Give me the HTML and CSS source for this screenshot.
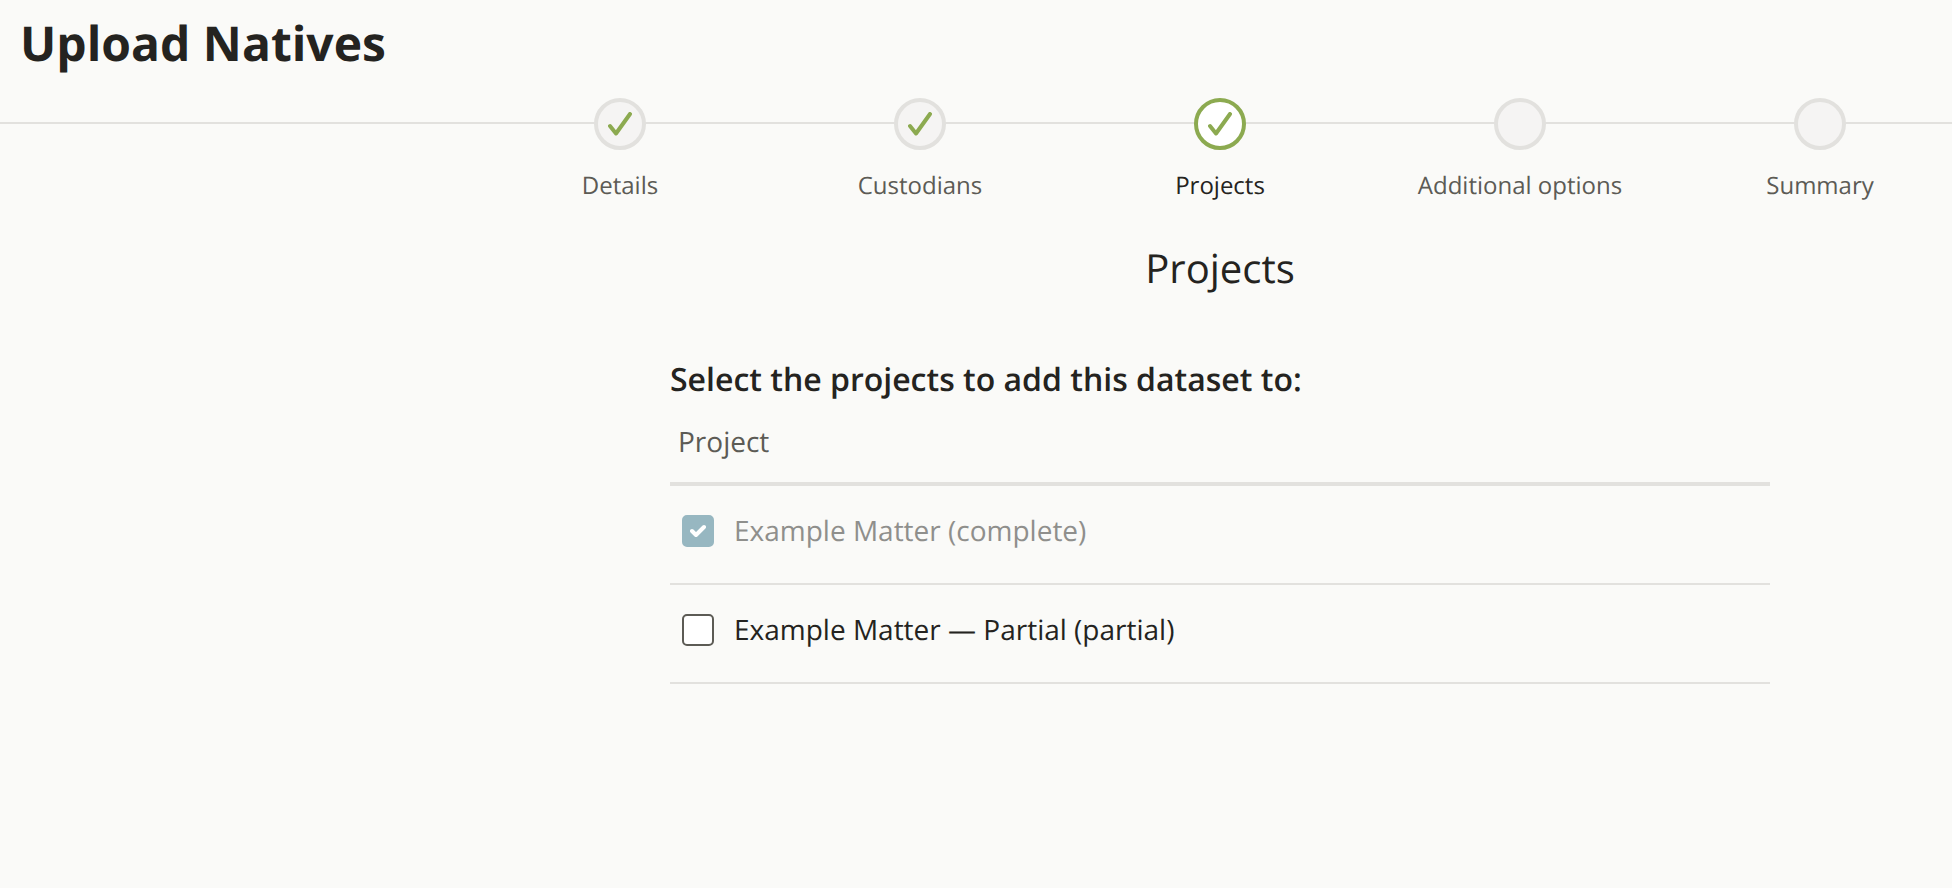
FILE: index.html
```html
<!DOCTYPE html>
<html lang="en">
<head>
  <meta charset="utf-8">
  <meta name="viewport" content="width=device-width, initial-scale=1">
  <title>Upload Natives</title>
  <link rel="stylesheet" href="styles.css">
</head>
<body>
  <header class="page-header">
    <h1 class="page-title">Upload Natives</h1>
  </header>

  <nav class="stepper" aria-label="Upload steps">
    <ol class="steps">
      <li class="step">
        <span class="step-marker">
          <svg class="step-check" viewBox="0 0 24 24" aria-hidden="true"><path d="M2 14 L8 21.500 L22 2"/></svg>
        </span>
        <span class="step-label">Details</span>
      </li>
      <li class="step">
        <span class="step-marker">
          <svg class="step-check" viewBox="0 0 24 24" aria-hidden="true"><path d="M2 14 L8 21.500 L22 2"/></svg>
        </span>
        <span class="step-label">Custodians</span>
      </li>
      <li class="step step-current" aria-current="step">
        <span class="step-marker">
          <svg class="step-check" viewBox="0 0 24 24" aria-hidden="true"><path d="M2 14 L8 21.500 L22 2"/></svg>
        </span>
        <span class="step-label">Projects</span>
      </li>
      <li class="step">
        <span class="step-marker"></span>
        <span class="step-label">Additional options</span>
      </li>
      <li class="step">
        <span class="step-marker"></span>
        <span class="step-label">Summary</span>
      </li>
    </ol>
  </nav>

  <main class="content">
    <h2 class="section-title">Projects</h2>
    <section class="projects">
      <h3 class="prompt" id="prompt">Select the projects to add this dataset to:</h3>
      <table class="project-table" aria-labelledby="prompt">
        <thead>
          <tr><th scope="col">Project</th></tr>
        </thead>
        <tbody>
          <tr>
            <td>
              <label class="project" for="project-complete">
                <span class="checkbox">
                  <input class="checkbox-input" type="checkbox" id="project-complete" checked disabled>
                  <svg class="checkbox-mark" viewBox="0 0 16 16" aria-hidden="true"><path d="M2 8 L6 12 L14 4"/></svg>
                </span>
                <span class="project-name">Example Matter (complete)</span>
              </label>
            </td>
          </tr>
          <tr>
            <td>
              <label class="project" for="project-partial">
                <span class="checkbox">
                  <input class="checkbox-input" type="checkbox" id="project-partial">
                  <svg class="checkbox-mark" viewBox="0 0 16 16" aria-hidden="true"><path d="M2 8 L6 12 L14 4"/></svg>
                </span>
                <span class="project-name">Example Matter — Partial (partial)</span>
              </label>
            </td>
          </tr>
        </tbody>
      </table>
    </section>
  </main>
</body>
</html>
```

FILE: styles.css
```css
:root {
  --text: #242320;
  --muted: #5c5b55;
  --line: #e2e1de;
  --green: #8caa50;
}

* {
  box-sizing: border-box;
}

body {
  margin: 0;
  background: #fafaf8;
  color: var(--text);
  font-family: "Open Sans", "Noto Sans", sans-serif;
  font-size: 28px;
  line-height: 40px;
  text-rendering: geometricPrecision;
}

.page-header {
  padding: 12px 20px 22px;
}

.page-title {
  margin: 0;
  font-size: 48px;
  line-height: 64px;
  font-weight: 700;
}

.stepper {
  display: flex;
  justify-content: center;
  padding-left: 25%;
  overflow: hidden;
  background: linear-gradient(var(--line), var(--line)) 0 24px / 100% 2px no-repeat;
}

.steps {
  display: flex;
  flex: none;
  margin: 0;
  padding: 0;
  list-style: none;
}

.step {
  display: flex;
  flex-direction: column;
  align-items: center;
  gap: 20px;
  width: 300px;
  color: var(--muted);
  font-size: 24px;
  line-height: 32px;
}

.step-marker {
  display: flex;
  align-items: center;
  justify-content: center;
  width: 52px;
  height: 52px;
  border: 4px solid var(--line);
  border-radius: 50%;
  background: #f5f4f3;
}

.step-check {
  width: 24px;
  height: 24px;
  fill: none;
  stroke: var(--green);
  stroke-width: 4;
  stroke-linecap: round;
  stroke-linejoin: round;
}

.step-current {
  color: var(--text);
}

.step-current .step-marker {
  border-color: var(--green);
  background: #fff;
}

.content {
  padding: 38px 0 40px 25%;
}

.section-title {
  margin: 0;
  font-size: 40px;
  line-height: 56px;
  font-weight: 400;
  text-align: center;
}

.projects {
  width: 100%;
  max-width: 1100px;
  margin: 64px auto 0;
}

.prompt {
  margin: 0;
  font-size: 32px;
  line-height: 40px;
  font-weight: 600;
}

.project-table {
  width: 100%;
  border-collapse: separate;
  border-spacing: 0;
}

.project-table th {
  padding: 22px 8px 20px;
  border-bottom: 4px solid var(--line);
  color: var(--muted);
  font-weight: 400;
  text-align: left;
}

.project-table td {
  padding: 25px 12px 32px;
  border-bottom: 2px solid var(--line);
}

.project {
  display: flex;
  align-items: center;
  gap: 20px;
}

.checkbox {
  display: grid;
  flex: none;
  place-items: center;
}

.checkbox-input {
  grid-area: 1 / 1;
  appearance: none;
  width: 32px;
  height: 32px;
  margin: 0;
  border: 2px solid var(--muted);
  border-radius: 5px;
  background: #fff;
}

.checkbox-input:checked {
  border-color: #317082;
  background: #317082;
}

.checkbox-input:checked:disabled {
  border-color: #97b7c1;
  background: #97b7c1;
}

.checkbox-mark {
  grid-area: 1 / 1;
  display: none;
  width: 16px;
  height: 16px;
  fill: none;
  stroke: #fff;
  stroke-width: 4;
  stroke-linecap: round;
  stroke-linejoin: round;
  pointer-events: none;
}

.checkbox-input:checked + .checkbox-mark {
  display: block;
}

.checkbox:has(:disabled) + .project-name {
  color: #8f8f8c;
}
```
